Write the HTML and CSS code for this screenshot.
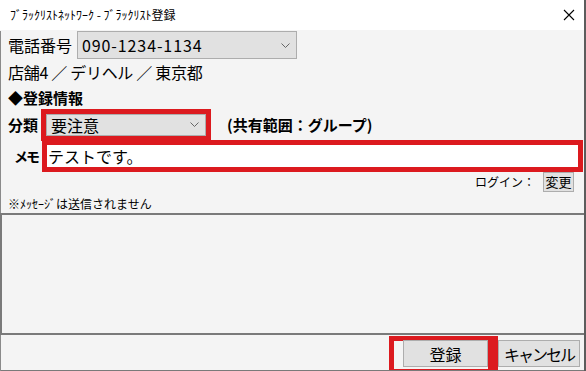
FILE: index.html
```html
<!DOCTYPE html>
<html lang="ja">
<head>
    <meta charset="UTF-8">
    <meta name="viewport" content="width=device-width, initial-scale=1.0">
    <title>ブラックリスト登録</title>
    <link rel="stylesheet" href="styles.css">
</head>
<body>
    <div class="window">
        <div class="titlebar">
            <span class="title">ﾌﾞﾗｯｸﾘｽﾄﾈｯﾄﾜｰｸ - ﾌﾞﾗｯｸﾘｽﾄ登録</span>
            <svg class="close" width="12" height="12" viewBox="0 0 12 12">
                <path d="M1 1 L11 11 M11 1 L1 11" stroke="#000" stroke-width="1.1" fill="none"/>
            </svg>
        </div>

        <div class="content">
            <div class="row phone-row">
                <span class="label">電話番号</span>
                <div class="combo phone">
                    <span class="digits">090-1234-1134</span>
                    <svg class="chev" width="9" height="5" viewBox="0 0 9 5"><path d="M0.5 0.5 L4.5 4.5 L8.5 0.5" stroke="#666" fill="none"/></svg>
                </div>
            </div>

            <div class="row store-row">店舗4 ／ デリヘル ／ 東京都</div>

            <div class="row heading">◆登録情報</div>

            <div class="row category-row">
                <span class="label bold cat-label">分類</span>
                <div class="combo category marked">
                    <span>要注意</span>
                    <svg class="chev" width="9" height="5" viewBox="0 0 9 5"><path d="M0.5 0.5 L4.5 4.5 L8.5 0.5" stroke="#666" fill="none"/></svg>
                </div>
                <span class="bold scope">(共有範囲：グループ)</span>
            </div>

            <div class="row memo-row">
                <span class="label bold memo-label">メモ</span>
                <div class="memo marked">テストです。</div>
            </div>

            <div class="row login-row">
                <span class="login">ログイン：</span>
                <button class="small-btn">変更</button>
            </div>

            <div class="row note">※ﾒｯｾｰｼﾞは送信されません</div>

            <div class="message-box"></div>

            <div class="footer">
                <span class="mark-btn"><button class="btn">登録</button></span>
                <button class="btn cancel">キャンセル</button>
            </div>
        </div>
    </div>
</body>
</html>
```

FILE: styles.css
```css
body {
    margin: 0;
    padding: 0;
    font-family: "Noto Sans CJK JP", sans-serif;
    color: #000;
    background: #f4f4f4;
}
.window {
    width: 584px;
    height: 371px;
    overflow: hidden;
    border-right: 2px solid #5c5c5c;
}
.titlebar {
    height: 30px;
    background: #fff;
    display: flex;
    align-items: center;
    justify-content: space-between;
    padding: 0 8px 0 10px;
}
.title {
    font-size: 12px;
    line-height: 14px;
}
.close {
    display: block;
    margin-right: 1px;
}
.content {
    background: #f4f4f4;
    border-left: 1px solid #8a8a8a;
    height: 341px;
}
.row {
    display: flex;
    align-items: center;
    padding-left: 7px;
    font-size: 16px;
    line-height: 20px;
}
.bold {
    font-weight: bold;
    font-size: 15px;
}
.phone-row {
    margin-top: 1px;
    height: 28px;
}
.phone-row .label {
    width: 69px;
}
.combo {
    box-sizing: border-box;
    height: 28px;
    background: #e1e1e1;
    border: 1px solid #adadad;
    display: flex;
    align-items: center;
    justify-content: space-between;
    padding: 0 6px 0 4px;
}
.combo.phone {
    width: 220px;
}
.digits {
    letter-spacing: 0.9px;
}
.chev {
    display: block;
}
.store-row {
    height: 26px;
    letter-spacing: -0.3px;
}
.heading {
    height: 25px;
    font-weight: bold;
    font-size: 15px;
}
.category-row {
    height: 29px;
}
.cat-label {
    width: 38px;
}
.combo.category {
    width: 160px;
    height: 22px;
}
.marked {
    outline: 5px solid #dc1a1f;
}
.scope {
    margin-left: 21px;
}
.memo-row {
    height: 33px;
}
.memo-label {
    padding-left: 6px;
    width: 33px;
    font-size: 14px;
    letter-spacing: -2px;
}
.memo {
    box-sizing: border-box;
    width: 531px;
    height: 22px;
    background: #fff;
    padding-left: 1px;
    line-height: 22px;
    box-shadow: 7px 0 0 -2px #2a7fd4;
}
.login-row {
    height: 20px;
    justify-content: flex-end;
    padding-right: 10px;
}
.login {
    font-size: 12px;
    margin-right: 8px;
}
.small-btn {
    box-sizing: border-box;
    height: 20px;
    width: 31px;
    padding: 0;
    background: #e1e1e1;
    border: 1px solid #adadad;
    font-family: inherit;
    font-size: 13px;
    line-height: 16px;
}
.note {
    height: 21px;
    font-size: 12px;
    padding-left: 7px;
    padding-top: 2px;
    box-sizing: border-box;
}
.message-box {
    box-sizing: border-box;
    height: 122px;
    margin-left: -1px;
    border: 2px solid #7a7a7a;
    border-right: none;
    background: #f4f4f4;
}
.footer {
    height: 36px;
    box-sizing: border-box;
    display: flex;
    justify-content: flex-end;
    align-items: flex-start;
    padding: 1px 4px 0 0;
    overflow: hidden;
    border-bottom: 1px solid #7a7a7a;
}
.mark-btn {
    display: block;
    border: 5px solid #dc1a1f;
    border-right-width: 10px;
    padding-left: 9px;
    height: 28px;
}
.btn {
    box-sizing: border-box;
    display: block;
    width: 85px;
    height: 27px;
    margin-top: -1px;
    padding: 0;
    background: #e1e1e1;
    border: 1px solid #adadad;
    font-family: inherit;
    font-size: 16px;
    line-height: 20px;
}
.btn.cancel {
    width: 82px;
    margin-top: 4px;
    letter-spacing: -2px;
}
```
